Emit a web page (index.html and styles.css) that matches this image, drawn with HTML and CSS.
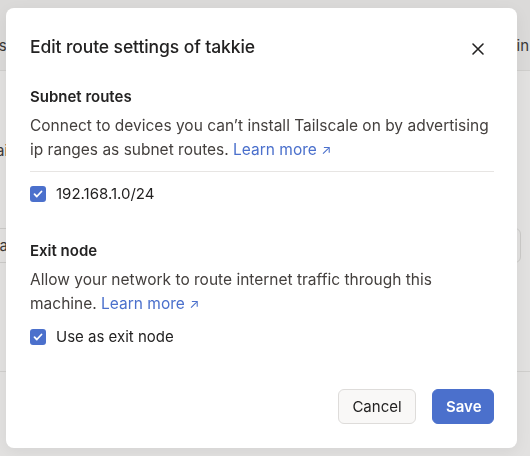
FILE: index.html
```html
<!DOCTYPE html>
<html lang="en">
<head>
<meta charset="utf-8">
<title>Edit route settings</title>
<link rel="stylesheet" href="styles.css">
</head>
<body>
<div class="page">
  <div class="page-header">
    <span class="tab tab-left">Routes</span>
    <span class="tab tab-right">Login</span>
  </div>
  <div class="page-row row-ai"><span class="frag">Domai</span></div>
  <div class="page-search">
    <span class="frag">Search</span>
  </div>
  <div class="page-line"></div>
</div>

<div class="dialog" role="dialog" aria-labelledby="dlg-title">
  <div class="dialog-head">
    <h2 id="dlg-title" class="dialog-title">Edit route settings of takkie</h2>
    <button class="close" aria-label="Close">
      <svg width="16" height="16" viewBox="0 0 16 16" fill="none" stroke="#232222" stroke-width="1.6" stroke-linecap="round"><path d="M3 3l10 10M13 3L3 13"/></svg>
    </button>
  </div>

  <section class="section">
    <h3 class="section-title">Subnet routes</h3>
    <p class="desc">Connect to devices you can’t install Tailscale on by advertising ip ranges as subnet routes. <a class="link" href="#">Learn more <span class="arrow">↗</span></a></p>
    <div class="divider"></div>
    <label class="check">
      <span class="box"><svg width="12" height="12" viewBox="0 0 12 12" fill="none" stroke="#fff" stroke-width="1.8" stroke-linecap="round" stroke-linejoin="round"><path d="M2.5 6.2l2.3 2.3 4.7-5"/></svg></span>
      <span>192.168.1.0/24</span>
    </label>
  </section>

  <section class="section section-exit">
    <h3 class="section-title">Exit node</h3>
    <p class="desc">Allow your network to route internet traffic through this machine. <a class="link" href="#">Learn more <span class="arrow">↗</span></a></p>
    <label class="check check-exit">
      <span class="box"><svg width="12" height="12" viewBox="0 0 12 12" fill="none" stroke="#fff" stroke-width="1.8" stroke-linecap="round" stroke-linejoin="round"><path d="M2.5 6.2l2.3 2.3 4.7-5"/></svg></span>
      <span>Use as exit node</span>
    </label>
  </section>

  <div class="actions">
    <button class="btn btn-secondary">Cancel</button>
    <button class="btn btn-primary">Save</button>
  </div>
</div>
</body>
</html>
```
FILE: styles.css
```css
* { box-sizing: border-box; }
html, body { margin: 0; padding: 0; }
body {
  width: 530px;
  height: 456px;
  overflow: hidden;
  background: #e2e1e0;
  font-family: Inter, "Noto Sans", sans-serif;
  color: #232222;
}
.page { width: 530px; height: 456px; }
.page-header {
  height: 71px;
  background: #dbdad9;
  border-bottom: 1px solid #d0cfcd;
  display: flex;
  justify-content: space-between;
  align-items: center;
  padding-top: 20px;
  font-size: 15px;
  color: #3a3837;
}
.tab-left { margin-left: -42px; }
.tab-right { margin-right: 1px; }
.page-row {
  height: 110px;
  display: flex;
  align-items: center;
  padding-top: 48px;
  font-size: 15px;
  color: #3a3837;
}
.row-ai .frag { margin-left: -37px; }
.page-search {
  margin-top: 47px;
  height: 35px;
  margin-left: -20px;
  margin-right: 9px;
  border: 1px solid #cbcac8;
  border-radius: 6px;
  display: flex;
  align-items: center;
  font-size: 15px;
  color: #3a3837;
}
.page-line { margin-top: 108px; border-top: 1px solid #d0cfcd; }

.dialog {
  position: fixed;
  left: 6px;
  top: 8px;
  width: 511px;
  height: 440px;
  background: #fff;
  border-radius: 8px;
  box-shadow: 0 4px 16px rgba(0,0,0,0.06);
  padding: 24px 23px 24px 24px;
  display: flex;
  flex-direction: column;
}
.dialog-head {
  display: flex;
  justify-content: space-between;
  align-items: center;
  height: 28px;
  margin-bottom: 25px;
}
.dialog-title {
  margin: 0;
  font-size: 17.5px;
  font-weight: 500;
  letter-spacing: -0.1px;
  color: #232222;
}
.close {
  border: 0;
  background: transparent;
  padding: 0;
  width: 24px;
  height: 24px;
  display: flex;
  align-items: center;
  justify-content: center;
  margin-right: 4px;
  margin-top: 6px;
}
.section-title {
  margin: 0 0 5px;
  font-size: 15px;
  font-weight: 600;
  line-height: 24px;
  color: #232222;
}
.desc {
  margin: 0;
  font-size: 15.5px;
  line-height: 24px;
  color: #44403e;
}
.link { color: #4b70cc; text-decoration: none; }
.arrow { font-size: 13px; }
.divider {
  margin-top: 9px;
  border-top: 1px solid #e7e5e3;
}
.check {
  display: flex;
  align-items: center;
  gap: 10px;
  font-size: 15px;
  line-height: 24px;
  color: #232222;
  margin-top: 10px;
}
.box {
  width: 16px;
  height: 16px;
  border-radius: 3px;
  background: #4b70cc;
  display: flex;
  align-items: center;
  justify-content: center;
}
.section-exit { margin-top: 33px; }
.check-exit { margin-top: 9px; }
.actions {
  margin-top: auto;
  display: flex;
  justify-content: flex-end;
  gap: 16px;
}
.btn {
  height: 35px;
  border-radius: 6px;
  font-family: Inter, "Noto Sans", sans-serif;
  font-size: 15px;
  padding: 0 13px;
}
.btn-secondary {
  background: #f9f8f7;
  border: 1px solid #dedcda;
  color: #232222;
  font-weight: 400;
  width: 78px;
}
.btn-primary {
  background: #4b70cc;
  border: 1px solid #4b70cc;
  color: #fff;
  font-weight: 600;
  width: 62px;
}
```
